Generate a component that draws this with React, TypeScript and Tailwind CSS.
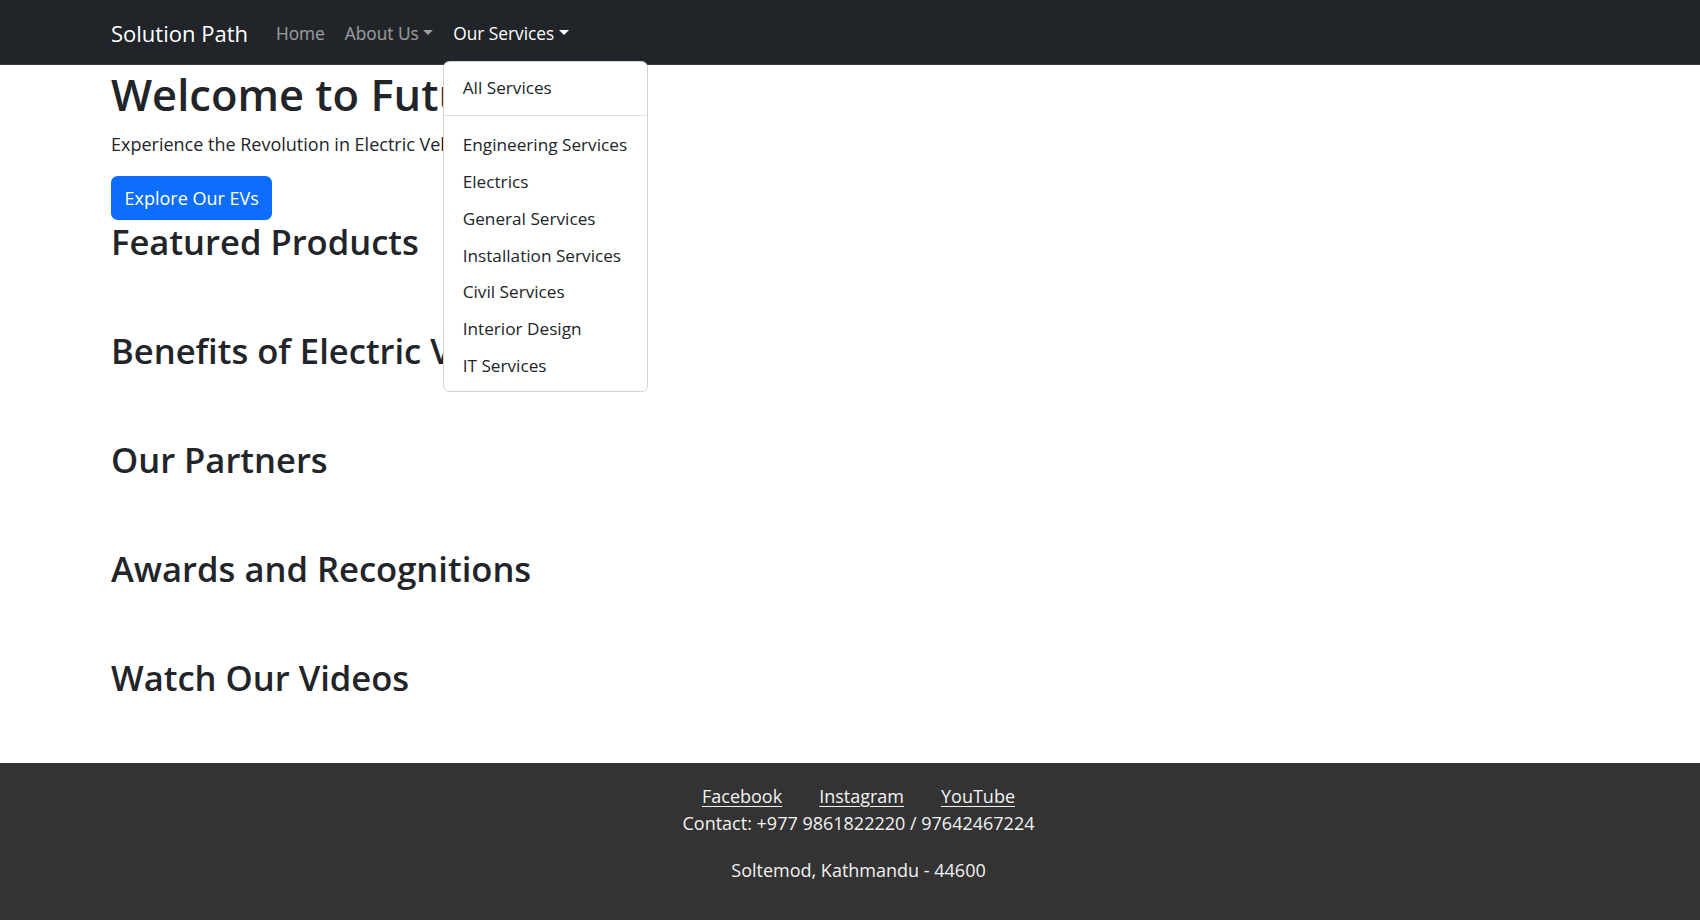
import React from "react";

function Caret() {
  return (
    <span className="inline-block ml-[4.4px] align-[4.4px] w-0 h-0 border-t-[5.2px] border-x-[5.2px] border-x-transparent border-t-current border-b-0" />
  );
}

const services = [
  "Engineering Services",
  "Electrics",
  "General Services",
  "Installation Services",
  "Civil Services",
  "Interior Design",
  "IT Services",
];

const sections = [
  "Featured Products",
  "Benefits of Electric Vehicles",
  "Our Partners",
  "Awards and Recognitions",
  "Watch Our Videos",
];

export default function App() {
  return (
    <div className="h-[920px] flex flex-col bg-white text-[#212529] font-['Open_Sans','Noto_Sans',sans-serif] overflow-hidden">
      <nav className="h-[65px] shrink-0 bg-[#212529] border-b border-[#3a3d40] flex items-center pt-[2px] px-[111px] relative z-10">
        <span className="text-[22px] leading-[34px] text-white mr-[18px] pb-[1px]">Solution Path</span>
        <ul className="flex items-center text-[17.3px] leading-[27px]">
          <li className="px-[10px] text-white/55">Home</li>
          <li className="px-[10px] text-white/55">
            About Us
            <Caret />
          </li>
          <li className="px-[10px] text-white relative">
            Our Services
            <Caret />
            <div className="absolute left-0 top-[41px] w-[205px] bg-white border border-black/[0.175] rounded-[6.5px] pt-[8px] pb-[7.5px] text-[#212529] text-[17.2px]">
              <div className="h-[36.8px] flex items-center pl-[18.5px]">All Services</div>
              <div className="mt-[8.5px] mb-[10.5px] h-px bg-black/[0.12]" />
              {services.map((s) => (
                <div key={s} className="h-[36.8px] flex items-center pl-[18.5px] whitespace-nowrap">
                  {s}
                </div>
              ))}
            </div>
          </li>
        </ul>
      </nav>

      <main className="flex-1 min-h-0 px-[111px]">
        <h1 className="mt-[3px] text-[43.5px] leading-[54px] font-semibold mb-[9px] whitespace-nowrap">
          Welcome to Future
        </h1>
        <p className="text-[18px] leading-[27px] mb-[18px]">
          Experience the Revolution in Electric Vehicles
        </p>
        <button className="h-[44px] px-[13.5px] rounded-[6.5px] bg-[#0d6efd] text-white text-[18px] leading-[27px]">
          Explore Our EVs
        </button>
        <div className="flex flex-col gap-[65.8px]">
          {sections.map((s) => (
            <h2 key={s} className="text-[34.6px] leading-[43.2px] font-semibold whitespace-nowrap">
              {s}
            </h2>
          ))}
        </div>
      </main>

      <footer className="h-[157px] shrink-0 bg-[#333333] text-[#f2f2f2] pt-[20px] pl-[17px] text-center text-[18px] leading-[27px]">
        <div className="flex justify-center gap-[37px]">
          <a className="underline underline-offset-[3px]">Facebook</a>
          <a className="underline underline-offset-[3px]">Instagram</a>
          <a className="underline underline-offset-[3px]">YouTube</a>
        </div>
        <p>Contact: +977 9861822220 / 97642467224</p>
        <p className="mt-[20px]">Soltemod, Kathmandu - 44600</p>
      </footer>
    </div>
  );
}
